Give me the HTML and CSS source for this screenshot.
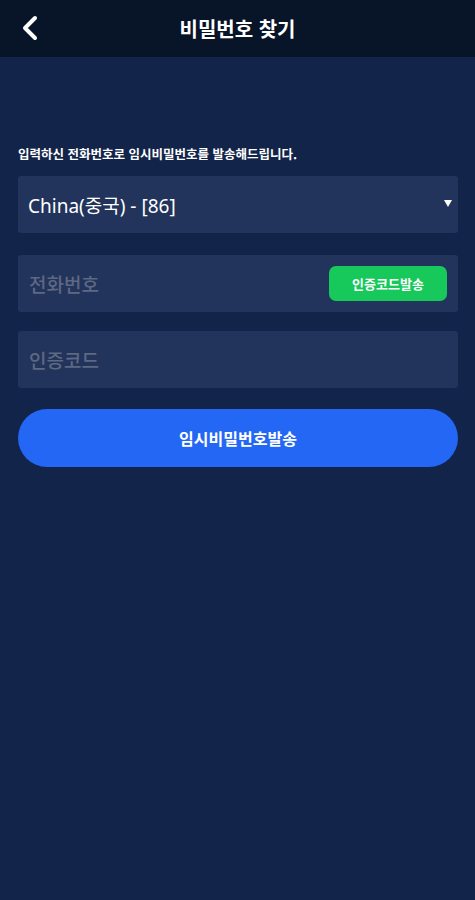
FILE: index.html
```html
<!DOCTYPE html>
<html lang="ko">
<head>
<meta charset="utf-8">
<title>비밀번호 찾기</title>
<link rel="stylesheet" href="styles.css">
</head>
<body>
<header class="topbar">
  <button class="back" aria-label="뒤로">
    <svg width="18" height="26" viewBox="0 0 18 26"><path d="M14 3 L4 13 L14 23" fill="none" stroke="#fff" stroke-width="4" stroke-linecap="round" stroke-linejoin="round"/></svg>
  </button>
  <h1 class="title">비밀번호 찾기</h1>
</header>
<main class="content">
  <p class="intro">입력하신 전화번호로 임시비밀번호를 발송해드립니다.</p>
  <div class="field select">
    <span class="value">China(중국) - [86]</span>
    <span class="caret"></span>
  </div>
  <div class="field phone">
    <span class="placeholder">전화번호</span>
    <button class="send-code">인증코드발송</button>
  </div>
  <div class="field code">
    <span class="placeholder">인증코드</span>
  </div>
  <button class="submit">임시비밀번호발송</button>
</main>
</body>
</html>
```
FILE: styles.css
```css
* { box-sizing: border-box; }
html, body { margin: 0; padding: 0; }
body {
  background: #13244a;
  font-family: "Noto Sans CJK KR", "Noto Sans", sans-serif;
  color: #fff;
  min-height: 900px;
}
.topbar {
  height: 57px;
  background: #081428;
  display: flex;
  align-items: center;
  justify-content: center;
  position: relative;
}
.back {
  position: absolute;
  left: 21px;
  top: 15px;
  background: none;
  border: 0;
  padding: 0;
  width: 18px;
  height: 26px;
  display: flex;
}
.title {
  margin: 0;
  font-size: 20px;
  font-weight: 700;
}
.content {
  padding: 87px 17px 0 18px;
  display: flex;
  flex-direction: column;
}
.intro {
  margin: 0 0 12px;
  font-size: 12.5px;
  font-weight: 700;
  line-height: 20px;
  letter-spacing: 0;
}
.field {
  height: 57px;
  background: #22345b;
  border-radius: 3px;
  display: flex;
  align-items: center;
  justify-content: space-between;
  padding: 0 12px 0 11px;
}
.select { margin-bottom: 22px; padding-left: 10px; }
.phone { margin-bottom: 19px; }
.code { margin-bottom: 21px; }
.value {
  font-size: 19px;
  font-weight: 400;
  font-family: "Noto Sans", "Noto Sans CJK KR", sans-serif;
}
.caret {
  width: 0; height: 0;
  border-left: 4px solid transparent;
  border-right: 4px solid transparent;
  border-top: 7px solid #fff;
  margin-right: -6px;
  margin-top: -3px;
}
.placeholder {
  font-size: 19px;
  color: #5d6883;
  font-weight: 500;
}
.send-code {
  width: 118px;
  height: 35px;
  border: 0;
  border-radius: 7px;
  background: #17c85b;
  color: #fff;
  font-family: inherit;
  font-size: 13px;
  font-weight: 700;
  margin-right: -1px;
}
.submit {
  height: 58px;
  border: 0;
  border-radius: 29px;
  background: #2367f4;
  color: #fff;
  font-family: inherit;
  font-size: 16px;
  font-weight: 700;
}
```
